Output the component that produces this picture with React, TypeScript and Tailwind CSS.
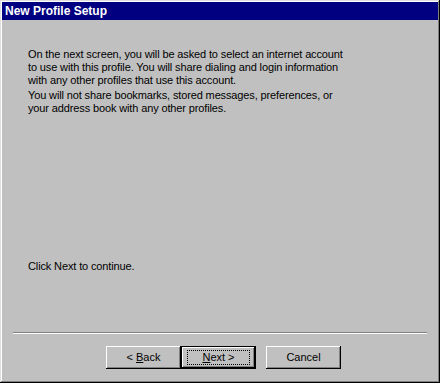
import type { ReactNode } from 'react'

const font = { fontFamily: '"Liberation Sans", Arial, sans-serif' }

function Button({
  children,
  isDefault = false,
}: {
  children: ReactNode
  isDefault?: boolean
}) {
  if (isDefault) {
    return (
      <div className="w-[75px] h-[23px] border border-black bg-[#c0c0c0] shadow-[inset_-1px_-1px_#000,inset_1px_1px_#fff,inset_-2px_-2px_#808080] flex items-center justify-center">
        <div className="w-[63px] h-[15px] border border-dotted border-black flex items-center justify-center text-[11px] text-black leading-none">
          {children}
        </div>
      </div>
    )
  }
  return (
    <div className="w-[75px] h-[23px] bg-[#c0c0c0] shadow-[inset_-1px_-1px_#000,inset_1px_1px_#fff,inset_-2px_-2px_#808080] flex items-center justify-center text-[11px] text-black leading-none">
      {children}
    </div>
  )
}

export default function App() {
  return (
    <div
      className="w-[440px] h-[383px] bg-[#c0c0c0] p-[2px] flex flex-col shadow-[inset_-1px_-1px_#000,inset_1px_1px_#dfdfdf,inset_-2px_-2px_#808080,inset_2px_2px_#fff]"
      style={font}
    >
      {/* Barre de titre */}
      <div className="h-[18px] bg-[#000080] flex items-center pl-[3px]">
        <span className="text-white text-[12px] font-bold leading-none">New Profile Setup</span>
      </div>

      <div className="flex-1 flex flex-col pl-[26px] pr-[11px] pt-[28px] text-[11px] leading-[13px] text-black">
        <div className="tracking-[-0.13px]">
          <p>
            On the next screen, you will be asked to select an internet account
            <br />
            to use with this profile. You will share dialing and login information
            <br />
            with any other profiles that use this account.
          </p>
          <p className="mt-[2px]">
            You will not share bookmarks, stored messages, preferences, or
            <br />
            your address book with any other profiles.
          </p>
        </div>

        <div className="flex-1" />
        <p className="tracking-[-0.13px]">Click Next to continue.</p>

        {/* Séparateur */}
        <div className="mt-[59px] -ml-[15px] h-[2px] border-t border-[#808080] border-b border-b-white" />

        <div className="flex mt-[12px] mb-[12px] pl-[78px]">
          <Button>
            &lt; <span className="underline ml-[3px]">B</span>ack
          </Button>
          <Button isDefault>
            <span className="underline">N</span>ext &gt;
          </Button>
          <div className="ml-[10px]">
            <Button>Cancel</Button>
          </div>
        </div>
      </div>
    </div>
  )
}
